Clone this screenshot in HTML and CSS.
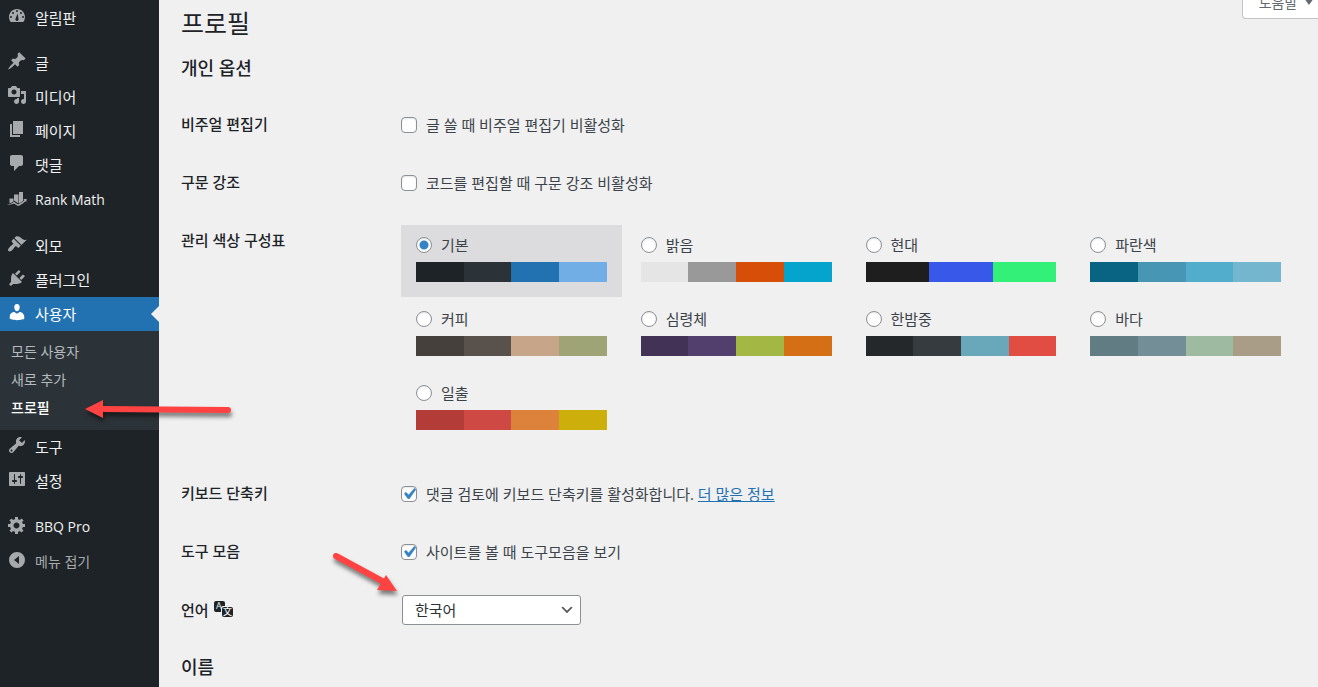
FILE: index.html
```html
<!DOCTYPE html>
<html lang="ko">
<head>
  <meta charset="UTF-8" />
  <meta name="viewport" content="width=device-width, initial-scale=1" />
  <title>프로필</title>
  <link rel="stylesheet" href="styles.css">
</head>
<body>
  <div class="admin">
    <nav class="sidebar">
      <a class="menu-item" href="#">
        <svg class="icon" viewBox="0 0 20 20"><path fill-rule="evenodd" d="M3.76 16h12.48A7.98 7.98 0 0 0 18 11c0-4.42-3.58-8-8-8s-8 3.58-8 8c0 1.89.66 3.63 1.76 5zM10 4a1 1 0 1 1 0 2 1 1 0 0 1 0-2zM6 6a1 1 0 1 1 0 2 1 1 0 0 1 0-2zm8 0a1 1 0 1 1 0 2 1 1 0 0 1 0-2zm-3.400 1.500l.900 5.300a1.600 1.600 0 1 1-3 0zM4 10a1 1 0 1 1 0 2 1 1 0 0 1 0-2zm12 0a1 1 0 1 1 0 2 1 1 0 0 1 0-2z"/></svg>
        <span>알림판</span>
      </a>
      <div class="separator"></div>
      <a class="menu-item" href="#">
        <svg class="icon" viewBox="0 0 20 20"><path d="M10.44 3.02l1.82-1.82 6.36 6.35-1.83 1.82c-1.05-.68-2.48-.57-3.41.36l-.75.75c-.92.93-1.04 2.35-.35 3.41l-1.83 1.82-2.41-2.41-2.8 2.79c-.42.42-3.38 2.71-3.8 2.29s1.86-3.39 2.28-3.81l2.79-2.79L4.1 9.36l1.83-1.82c1.05.69 2.48.57 3.4-.36l.75-.75c.93-.92 1.05-2.35.36-3.41z"/></svg>
        <span>글</span>
      </a>
      <a class="menu-item" href="#">
        <svg class="icon" viewBox="0 0 20 20"><path d="M13 11V4c0-.55-.45-1-1-1h-1.670L9 1H5L3.670 3H2c-.55 0-1 .45-1 1v7c0 .55.45 1 1 1h10c.55 0 1-.45 1-1zM7 4.500c1.380 0 2.500 1.120 2.500 2.500S8.380 9.500 7 9.500 4.500 8.380 4.500 7 5.620 4.500 7 4.500zM14 6h5v10.500c0 1.380-1.120 2.500-2.500 2.500S14 17.880 14 16.500s1.120-2.500 2.500-2.500c.17 0 .34.02.5.05V9h-3V6zm-4 8.050V13h2v3.500c0 1.380-1.120 2.500-2.500 2.500S7 17.880 7 16.500 8.120 14 9.500 14c.17 0 .34.02.5.05z"/></svg>
        <span>미디어</span>
      </a>
      <a class="menu-item" href="#">
        <svg class="icon" viewBox="0 0 20 20"><path d="M6 15V2h10v13H6zm-1 1h8v2H3V5h2v11z"/></svg>
        <span>페이지</span>
      </a>
      <a class="menu-item" href="#">
        <svg class="icon" viewBox="0 0 20 20"><path d="M5 2h9c1.1 0 2 .9 2 2v7c0 1.1-.9 2-2 2h-2l-5 5v-5H5c-1.1 0-2-.9-2-2V4c0-1.1.9-2 2-2z"/></svg>
        <span>댓글</span>
      </a>
      <a class="menu-item latin" href="#">
        <svg class="icon" viewBox="0 0 20 20"><path d="M2.500 10.500H6.500v3L2.500 15.500zM7 6.500h4.500v9L7 12.500zM12 4h4v9l-4 2.500z"/><path d="M0 16.500c3 0 5-1.200 7-2.700l4 2.700c2.500-1.200 4.500-2.500 6.300-4.300l-1-1 3.400-.5-.4 3.300-1-.8c-2 2-4.500 3.800-7.300 4.800l-4-2.500c-2 1-4.500 1.500-7 1z"/></svg>
        <span>Rank Math</span>
      </a>
      <div class="separator"></div>
      <a class="menu-item" href="#">
        <svg class="icon" viewBox="0 0 20 20"><path d="M14.480 11.060L7.410 3.990l1.500-1.500c.5-.56 2.300-.47 3.510.32 1.210.8 1.430 1.280 2.910 2.100 1.180.64 2.450 1.260 4.450.85zm-.71.71L6.700 4.700 4.930 6.470c-.39.39-.39 1.020 0 1.410l1.060 1.060c.39.39.39 1.030 0 1.420-.6.6-1.430 1.110-2.210 1.690-.35.26-.7.53-1.010.84C1.430 14.230.4 16.080 1.400 17.070c.99 1 2.840-.03 4.180-1.360.31-.31.58-.66.85-1.020.57-.78 1.080-1.610 1.690-2.210.39-.39 1.020-.39 1.410 0l1.060 1.060c.39.39 1.020.39 1.410 0z"/></svg>
        <span>외모</span>
      </a>
      <a class="menu-item" href="#">
        <svg class="icon" viewBox="0 0 20 20"><path d="M13.110 4.360L9.870 7.600 8 5.730l3.240-3.240c.35-.34 1.050-.2 1.560.32.52.51.66 1.210.31 1.550zm-8 1.770l.91-1.120 9.010 9.010-1.190.84c-.71.71-2.630 1.160-3.820 1.160H6.140L4.900 17.260c-.59.59-1.540.59-2.120 0-.59-.58-.59-1.530 0-2.120l1.240-1.240v-3.880c0-1.130.4-3.190 1.090-3.890zm7.260 3.970l3.240-3.240c.34-.35 1.040-.21 1.550.31.52.51.66 1.210.31 1.550l-3.240 3.250z"/></svg>
        <span>플러그인</span>
      </a>
      <a class="menu-item current" href="#">
        <svg class="icon" viewBox="0 0 20 20"><path d="M10 9.250c-2.270 0-2.730-3.440-2.730-3.440C7 4.020 7.820 2 9.970 2c2.160 0 2.980 2.020 2.710 3.810 0 0-.41 3.440-2.680 3.440zm0 2.570L12.720 10c2.390 0 4.520 2.330 4.520 4.530v2.490s-3.650 1.130-7.240 1.130c-3.650 0-7.240-1.130-7.240-1.130v-2.490c0-2.250 1.940-4.480 4.470-4.480z"/></svg>
        <span>사용자</span>
      </a>
      <div class="submenu">
        <a href="#">모든 사용자</a>
        <a href="#">새로 추가</a>
        <a class="active" href="#">프로필</a>
      </div>
      <a class="menu-item" href="#">
        <svg class="icon" viewBox="0 0 20 20"><path d="M16.680 9.770c-1.340 1.340-3.300 1.670-4.950.99l-5.410 6.520c-.99.99-2.590.99-3.580 0s-.99-2.590 0-3.570l6.520-5.420c-.68-1.650-.35-3.610.99-4.950 1.280-1.280 3.120-1.620 4.720-1.060l-2.890 2.890 2.820 2.820 2.860-2.870c.53 1.580.18 3.390-1.080 4.650zM3.810 16.210c.4.39 1.040.39 1.430 0 .4-.4.4-1.040 0-1.430-.39-.4-1.030-.4-1.430 0-.39.39-.39 1.030 0 1.430z"/></svg>
        <span>도구</span>
      </a>
      <a class="menu-item" href="#">
        <svg class="icon" viewBox="0 0 20 20"><path d="M18 16V4c0-.55-.45-1-1-1H3c-.55 0-1 .45-1 1v12c0 .55.45 1 1 1h14c.55 0 1-.45 1-1zM8 11h1c.55 0 1 .45 1 1s-.45 1-1 1H8v1.500c0 .28-.22.5-.5.5s-.5-.22-.5-.5V13H6c-.55 0-1-.45-1-1s.45-1 1-1h1V5.500c0-.28.22-.5.5-.5s.5.22.5.5V11zm5-2h-1c-.55 0-1-.45-1-1s.45-1 1-1h1V5.500c0-.28.22-.5.5-.5s.5.22.5.5V7h1c.55 0 1 .45 1 1s-.45 1-1 1h-1v5.500c0 .28-.22.5-.5.5s-.5-.22-.5-.5V9z"/></svg>
        <span>설정</span>
      </a>
      <div class="separator"></div>
      <a class="menu-item latin" href="#">
        <svg class="icon" viewBox="0 0 20 20"><path d="M18 12h-2.180c-.17.7-.44 1.350-.81 1.930l1.540 1.540-2.100 2.100-1.540-1.540c-.58.36-1.230.63-1.910.79V19H8v-2.180c-.68-.16-1.330-.43-1.910-.79l-1.540 1.540-2.120-2.120 1.540-1.540c-.36-.58-.63-1.230-.79-1.910H1V9.030h2.170c.16-.7.44-1.350.8-1.940L2.430 5.550l2.100-2.100 1.540 1.540c.58-.37 1.240-.64 1.930-.81V2h3v2.180c.68.16 1.330.43 1.910.79l1.540-1.540 2.120 2.120-1.540 1.540c.36.59.64 1.240.8 1.940H18V12zm-8.500 1.500c1.660 0 3-1.340 3-3s-1.340-3-3-3-3 1.340-3 3 1.340 3 3 3z"/></svg>
        <span>BBQ Pro</span>
      </a>
      <button class="menu-item collapse" type="button">
        <svg class="icon" viewBox="0 0 20 20"><path fill-rule="evenodd" d="M10 2a8 8 0 1 1 0 16 8 8 0 0 1 0-16zm2 4l-5 4 5 4z"/></svg>
        <span>메뉴 접기</span>
      </button>
    </nav>

    <main class="content">
      <button class="help-tab" type="button">도움말 <span class="caret"></span></button>
      <h1>프로필</h1>

      <form>
        <h2>개인 옵션</h2>
        <div class="row">
          <div class="row-title">비주얼 편집기</div>
          <label class="option"><input type="checkbox"> 글 쓸 때 비주얼 편집기 비활성화</label>
        </div>
        <div class="row">
          <div class="row-title">구문 강조</div>
          <label class="option"><input type="checkbox"> 코드를 편집할 때 구문 강조 비활성화</label>
        </div>
        <div class="row">
          <div class="row-title" id="scheme-title">관리 색상 구성표</div>
          <div class="schemes" role="radiogroup" aria-labelledby="scheme-title">
            <label class="scheme default selected">
              <span class="scheme-name"><input type="radio" name="scheme" checked> 기본</span>
              <span class="palette"><i></i><i></i><i></i><i></i></span>
            </label>
            <label class="scheme light">
              <span class="scheme-name"><input type="radio" name="scheme"> 밝음</span>
              <span class="palette"><i></i><i></i><i></i><i></i></span>
            </label>
            <label class="scheme modern">
              <span class="scheme-name"><input type="radio" name="scheme"> 현대</span>
              <span class="palette"><i></i><i></i><i></i></span>
            </label>
            <label class="scheme blue">
              <span class="scheme-name"><input type="radio" name="scheme"> 파란색</span>
              <span class="palette"><i></i><i></i><i></i><i></i></span>
            </label>
            <label class="scheme coffee">
              <span class="scheme-name"><input type="radio" name="scheme"> 커피</span>
              <span class="palette"><i></i><i></i><i></i><i></i></span>
            </label>
            <label class="scheme ectoplasm">
              <span class="scheme-name"><input type="radio" name="scheme"> 심령체</span>
              <span class="palette"><i></i><i></i><i></i><i></i></span>
            </label>
            <label class="scheme midnight">
              <span class="scheme-name"><input type="radio" name="scheme"> 한밤중</span>
              <span class="palette"><i></i><i></i><i></i><i></i></span>
            </label>
            <label class="scheme ocean">
              <span class="scheme-name"><input type="radio" name="scheme"> 바다</span>
              <span class="palette"><i></i><i></i><i></i><i></i></span>
            </label>
            <label class="scheme sunrise">
              <span class="scheme-name"><input type="radio" name="scheme"> 일출</span>
              <span class="palette"><i></i><i></i><i></i><i></i></span>
            </label>
          </div>
        </div>
        <div class="row">
          <div class="row-title">키보드 단축키</div>
          <div class="option">
            <input type="checkbox" id="shortcuts" checked>
            <span><label for="shortcuts">댓글 검토에 키보드 단축키를 활성화합니다.</label> <a href="#">더 많은 정보</a></span>
          </div>
        </div>
        <div class="row">
          <div class="row-title">도구 모음</div>
          <label class="option"><input type="checkbox" checked> 사이트를 볼 때 도구모음을 보기</label>
        </div>
        <div class="row language">
          <label class="row-title" for="locale">언어
            <svg class="translate" viewBox="0 0 20 20" aria-hidden="true">
              <path d="M2 2h7a2 2 0 0 1 2 2v3H9a2 2 0 0 0-2 2v4H2a2 2 0 0 1-2-2V4a2 2 0 0 1 2-2z"/>
              <rect x="8" y="8" width="11" height="10" rx="2"/>
              <text x="2" y="10" font-size="9">A</text>
              <text x="9" y="16" font-size="9">文</text>
            </svg>
          </label>
          <div class="field">
            <select id="locale">
              <option>한국어</option>
            </select>
          </div>
        </div>

        <h2>이름</h2>
      </form>
    </main>

    <!-- pointers to the profile menu and the language field -->
    <svg class="pointer to-profile" viewBox="0 0 160 30" aria-hidden="true">
      <path d="M22 14L148 15" stroke-width="6"/>
      <path class="head" d="M5 14L23 5v18z"/>
    </svg>
    <svg class="pointer to-language" viewBox="0 0 80 56" aria-hidden="true">
      <path d="M8 9L56 35" stroke-width="6"/>
      <path class="head" d="M69 44L58 28l-9 15z"/>
    </svg>
  </div>
</body>
</html>
```

FILE: styles.css
```css
* {
  box-sizing: border-box;
}

body {
  margin: 0;
  background: #f0f0f1;
  color: #3c434a;
  font-family: "Open Sans", "Noto Sans CJK KR", sans-serif;
  font-size: 15px;
  line-height: 22px;
}

.admin {
  position: relative;
  display: flex;
  height: 100vh;
  overflow: hidden;
}

/* sidebar */
.sidebar {
  flex: 0 0 159px;
  padding-top: 1px;
  background: #1d2327;
}

.menu-item {
  position: relative;
  display: flex;
  align-items: center;
  gap: 8px;
  width: 100%;
  height: 34px;
  padding: 0 7px;
  border: 0;
  background: none;
  color: #f0f0f1;
  font: inherit;
  text-decoration: none;
}

.menu-item.latin {
  height: 36px;
  font-size: 14px;
}

.icon {
  width: 20px;
  height: 20px;
  margin-bottom: 4px;
  fill: #a7aaad;
}

.menu-item.current {
  background: #2271b1;
  color: #fff;
}

.menu-item.current .icon {
  fill: #fff;
}

.menu-item.current::after {
  content: "";
  position: absolute;
  right: 0;
  top: 9px;
  border: 8px solid transparent;
  border-left: 0;
  border-right-color: #f0f0f1;
}

.menu-item.collapse {
  color: #a7aaad;
  font-size: 14px;
  cursor: pointer;
}

.separator {
  height: 11px;
}

.submenu {
  padding: 7px 0 8px;
  background: #2c3338;
}

.submenu a {
  display: block;
  padding: 0 11px;
  color: #b4b9be;
  font-size: 14px;
  line-height: 28px;
  text-decoration: none;
}

.submenu .active {
  color: #fff;
  font-weight: 500;
}

/* content */
.content {
  position: relative;
  flex: 1;
  padding: 8px 22px 0;
}

.help-tab {
  position: absolute;
  top: -12px;
  right: 0;
  height: 31px;
  padding: 0 4px 2px 16px;
  border: 1px solid #c3c4c7;
  border-right: 0;
  border-radius: 0 0 0 4px;
  background: #fff;
  color: #646970;
  font: inherit;
  font-size: 14px;
}

.caret {
  display: inline-block;
  margin: 0 0 3px 3px;
  border: 5px solid transparent;
  border-top: 7px solid #646970;
  border-bottom: 0;
}

h1 {
  margin: 0;
  color: #1d2327;
  font-size: 25px;
  font-weight: 400;
  line-height: 30px;
}

h2 {
  margin: 18px 0 15px;
  color: #1d2327;
  font-size: 18px;
  font-weight: 500;
  line-height: 24px;
}

.row {
  display: grid;
  grid-template-columns: 220px 1fr;
}

.row-title {
  padding: 18px 0;
  color: #1d2327;
  font-weight: 500;
}

.option {
  display: flex;
  align-items: center;
  gap: 9px;
  padding: 19px 0 17px;
}

.option a {
  color: #2271b1;
}

input {
  appearance: none;
  flex: none;
  width: 16px;
  height: 16px;
  margin: 0;
  border: 1px solid #8c8f94;
  border-radius: 4px;
  background: #fff;
  box-shadow: inset 0 1px 2px rgba(0, 0, 0, 0.1);
}

input[type="checkbox"]:checked {
  background: #fff url("data:image/svg+xml,%3Csvg xmlns='http://www.w3.org/2000/svg' viewBox='0 0 20 20'%3E%3Cpath d='M14.830 4.890l1.340.94-5.810 8.380H9.020L5.780 9.670l1.340-1.250 2.570 2.400z' fill='%233582c4' stroke='%233582c4' stroke-width='.5'/%3E%3C/svg%3E") center / 22px no-repeat;
}

input[type="radio"] {
  border-radius: 50%;
}

input[type="radio"]:checked {
  background: radial-gradient(circle, #3582c4 4px, #fff 5px);
}

/* color schemes */
.schemes {
  display: grid;
  grid-template-columns: repeat(4, 1fr);
  gap: 2px 4px;
  padding: 14px 0 19px;
}

.scheme {
  padding: 10px 15px 15px;
}

.scheme.selected {
  background: #dcdcde;
}

.scheme-name {
  display: flex;
  align-items: center;
  gap: 9px;
  height: 20px;
  margin-bottom: 7px;
}

.palette {
  display: flex;
  height: 20px;
}

.palette i {
  flex: 1;
}

.default i:nth-child(1) { background: #1d2327; }
.default i:nth-child(2) { background: #2c3338; }
.default i:nth-child(3) { background: #2271b1; }
.default i:nth-child(4) { background: #72aee6; }

.light i:nth-child(1) { background: #e5e5e5; }
.light i:nth-child(2) { background: #999; }
.light i:nth-child(3) { background: #d64e07; }
.light i:nth-child(4) { background: #04a4cc; }

.modern i:nth-child(1) { background: #1e1e1e; }
.modern i:nth-child(2) { background: #3858e9; }
.modern i:nth-child(3) { background: #33f078; }

.blue i:nth-child(1) { background: #096484; }
.blue i:nth-child(2) { background: #4796b3; }
.blue i:nth-child(3) { background: #52accc; }
.blue i:nth-child(4) { background: #74b6ce; }

.coffee i:nth-child(1) { background: #46403c; }
.coffee i:nth-child(2) { background: #59524c; }
.coffee i:nth-child(3) { background: #c7a589; }
.coffee i:nth-child(4) { background: #9ea476; }

.ectoplasm i:nth-child(1) { background: #413256; }
.ectoplasm i:nth-child(2) { background: #523f6d; }
.ectoplasm i:nth-child(3) { background: #a3b745; }
.ectoplasm i:nth-child(4) { background: #d46f15; }

.midnight i:nth-child(1) { background: #25282b; }
.midnight i:nth-child(2) { background: #363b3f; }
.midnight i:nth-child(3) { background: #69a8bb; }
.midnight i:nth-child(4) { background: #e14d43; }

.ocean i:nth-child(1) { background: #627c83; }
.ocean i:nth-child(2) { background: #738e96; }
.ocean i:nth-child(3) { background: #9ebaa0; }
.ocean i:nth-child(4) { background: #aa9d88; }

.sunrise i:nth-child(1) { background: #b43c38; }
.sunrise i:nth-child(2) { background: #cf4944; }
.sunrise i:nth-child(3) { background: #dd823b; }
.sunrise i:nth-child(4) { background: #ccaf0b; }

/* language */
.language .row-title {
  display: flex;
  gap: 5px;
  padding: 19px 0 0;
}

.translate {
  width: 20px;
  height: 20px;
  fill: #1d2327;
}

.translate text {
  fill: #f0f0f1;
}

.field {
  padding: 15px 1px 12px;
}

select {
  appearance: none;
  display: block;
  width: 179px;
  height: 30px;
  padding: 0 24px 0 12px;
  border: 1px solid #8c8f94;
  border-radius: 3px;
  background: #fff url("data:image/svg+xml,%3Csvg xmlns='http://www.w3.org/2000/svg' viewBox='0 0 20 20'%3E%3Cpath d='M5 6l5 5 5-5 2 1-7 7-7-7 2-1z' fill='%23555'/%3E%3C/svg%3E") right 5px center / 16px no-repeat;
  color: #2c3338;
  font: inherit;
}

/* pointers */
.pointer {
  position: absolute;
  fill: none;
  stroke: #ff4242;
  stroke-linecap: round;
  filter: drop-shadow(1px 4px 2px rgba(0, 0, 0, 0.5));
  pointer-events: none;
}

.pointer .head {
  fill: #ff4242;
  stroke: none;
}

.to-profile {
  left: 80px;
  top: 395px;
  width: 160px;
  height: 30px;
}

.to-language {
  left: 328px;
  top: 547px;
  width: 80px;
  height: 56px;
}
```
